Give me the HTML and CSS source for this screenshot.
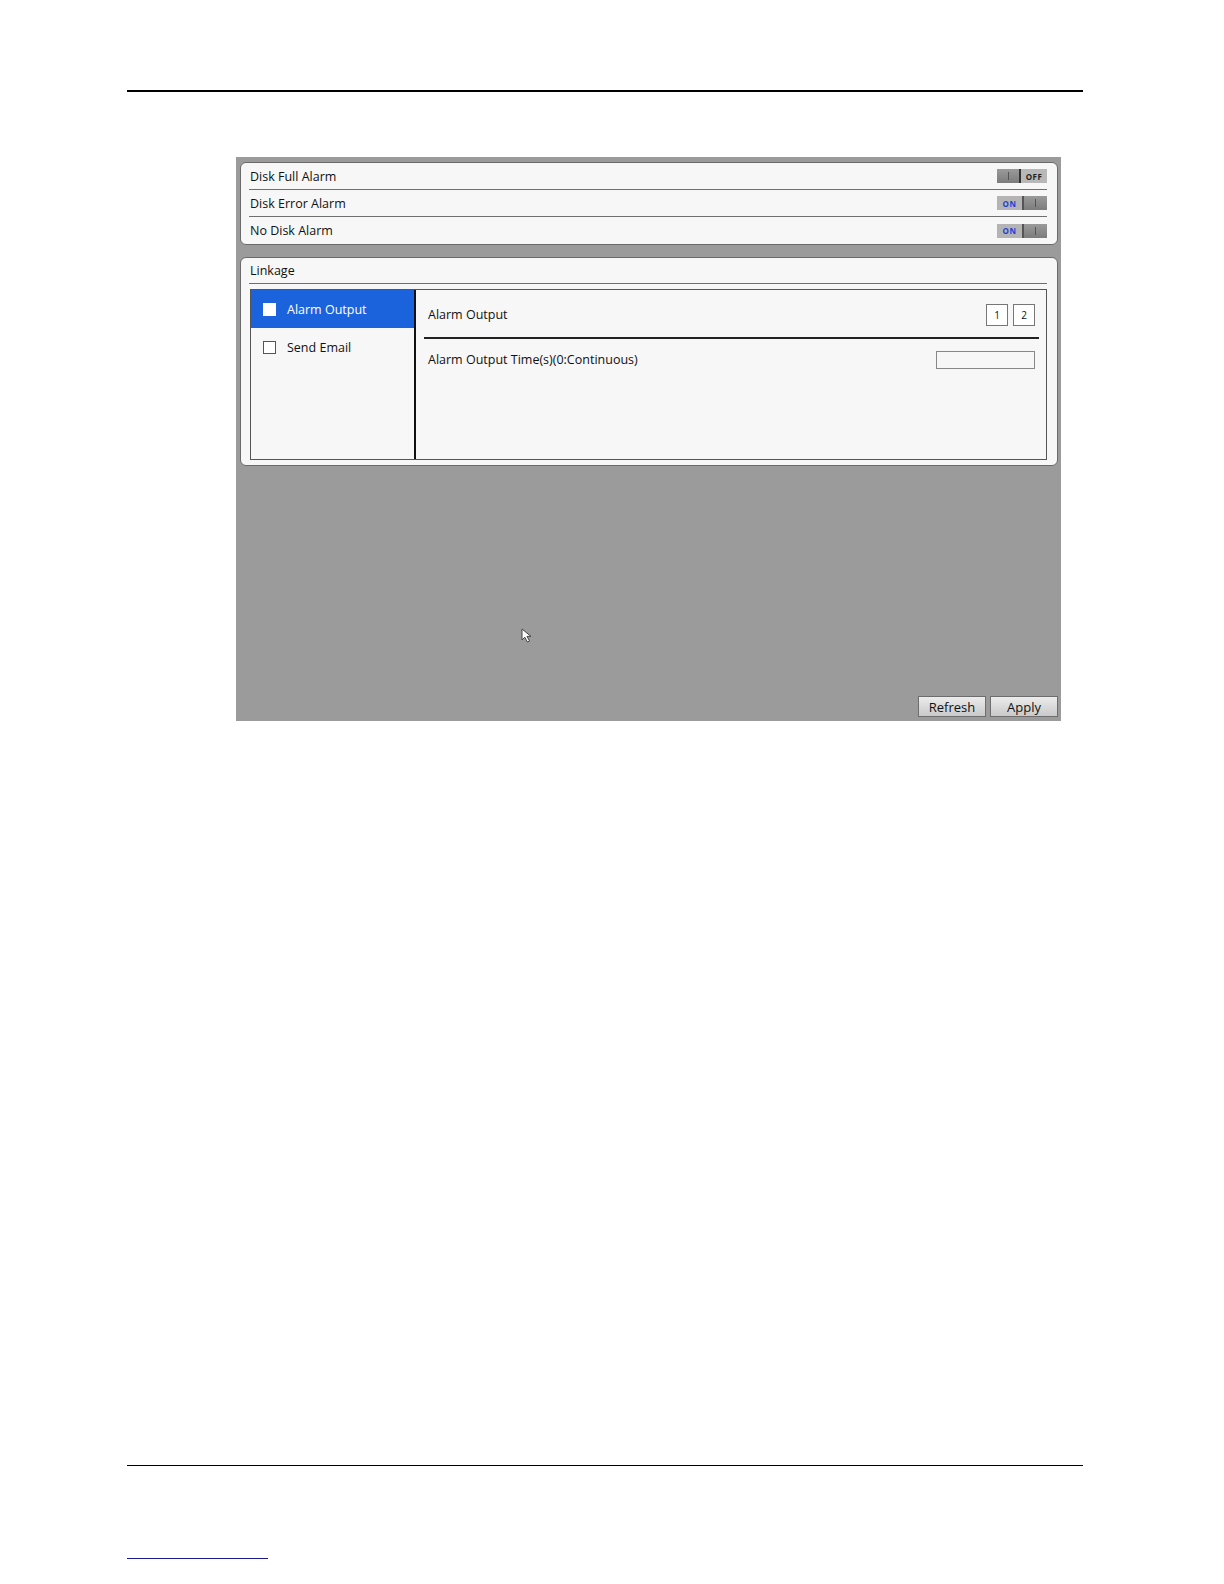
FILE: index.html
```html
<!DOCTYPE html>
<html lang="en">

<head>
    <meta charset="UTF-8">
    <meta name="viewport" content="width=device-width, initial-scale=1.0">
    <title>Disk Alarm</title>
    <link rel="stylesheet" href="styles.css">
</head>

<body>
    <div class="page">
        <div class="top-rule"></div>

        <div class="shot">
            <div class="card alarms">
                <div class="row">
                    <span>Disk Full Alarm</span>
                    <div class="toggle off"><span class="knob"></span><span class="lbl">OFF</span></div>
                </div>
                <div class="row">
                    <span>Disk Error Alarm</span>
                    <div class="toggle on"><span class="lbl">ON</span><span class="knob"></span></div>
                </div>
                <div class="row last">
                    <span>No Disk Alarm</span>
                    <div class="toggle on"><span class="lbl">ON</span><span class="knob"></span></div>
                </div>
            </div>

            <div class="card linkage">
                <div class="card-title">Linkage</div>
                <div class="link-box">
                    <div class="link-list">
                        <div class="link-item active"><span class="check"></span>Alarm Output</div>
                        <div class="link-item"><span class="check"></span>Send Email</div>
                    </div>
                    <div class="link-detail">
                        <div class="detail-row first">
                            <span>Alarm Output</span>
                            <div class="outputs">
                                <span class="out-box">1</span>
                                <span class="out-box">2</span>
                            </div>
                        </div>
                        <div class="detail-row">
                            <span>Alarm Output Time(s)(0:Continuous)</span>
                            <span class="time-input"></span>
                        </div>
                    </div>
                </div>
            </div>

            <div class="spacer">
                <svg class="cursor" width="13" height="15" viewBox="0 0 13 15">
                    <path d="M1 1 L1 12 L3.8 9.2 L6.4 14 L8.6 13 L6 8.4 L10 8.4 Z" fill="#fff" stroke="#444" stroke-width="1" />
                </svg>
            </div>

            <div class="actions">
                <button class="btn">Refresh</button>
                <button class="btn">Apply</button>
            </div>
        </div>

        <div class="bottom-rule"></div>
        <div class="link-line"></div>
    </div>
</body>

</html>
```

FILE: styles.css
```css
body {
    margin: 0;
    padding: 0;
    background-color: #fff;
    font-family: "Open Sans", "Noto Sans", sans-serif;
    overflow: hidden;
}

.page {
    width: 1224px;
    height: 1584px;
    padding-top: 90px;
    box-sizing: border-box;
    position: relative;
}

.top-rule {
    margin-left: 127px;
    width: 956px;
    height: 2px;
    background-color: #000;
}

/* ?screenshot panel */
.shot {
    margin: 65px 0 0 236px;
    width: 825px;
    height: 564px;
    background-color: #9b9b9b;
    padding: 5px 3px 4px 4px;
    box-sizing: border-box;
    display: flex;
    flex-direction: column;
}

.card {
    background-color: #f7f7f7;
    border: 1px solid #6a6a6a;
    border-radius: 6px;
    padding: 0 10px 0 8px;
}

.alarms {
    height: 83px;
    box-sizing: border-box;
}

.row {
    height: 27px;
    border-bottom: 1px solid #6f6f6f;
    display: flex;
    align-items: center;
    justify-content: space-between;
    font-size: 12.5px;
    color: #111;
    box-sizing: border-box;
    padding-left: 1px;
}

.row.last {
    border-bottom: none;
}

.toggle {
    width: 50px;
    height: 14px;
    display: flex;
    background-color: #a9a9a9;
    font-size: 8px;
    font-weight: bold;
    letter-spacing: .5px;
}

.toggle .knob {
    width: 24px;
    height: 14px;
    background: linear-gradient(#9a9a9a, #7c7c7c);
    border-right: 2px solid #333;
    box-sizing: border-box;
    position: relative;
}

.toggle .knob::after {
    content: "";
    position: absolute;
    left: 11px;
    top: 3px;
    width: 1px;
    height: 8px;
    background-color: #555;
}

.toggle.on .knob {
    border-right: none;
    border-left: 2px solid #555;
    width: 25px;
}

.toggle .lbl {
    flex: 1;
    display: flex;
    align-items: center;
    justify-content: center;
}

.toggle.off .lbl {
    color: #222;
    background-color: #b8b8b8;
}

.toggle.on .lbl {
    color: #1c3fd8;
    background-color: #b4b4b4;
}

.linkage {
    margin-top: 12px;
    height: 209px;
    box-sizing: border-box;
}

.card-title {
    height: 25px;
    border-bottom: 1px solid #6f6f6f;
    font-size: 12.5px;
    color: #111;
    display: flex;
    align-items: center;
    padding-left: 1px;
    margin-bottom: 5px;
}

.link-box {
    margin-left: 1px;
    height: 171px;
    border: 1px solid #555;
    display: flex;
    box-sizing: border-box;
}

.link-list {
    width: 163px;
    border-right: 2px solid #111;
    flex-shrink: 0;
}

.link-item {
    height: 38px;
    display: flex;
    align-items: center;
    font-size: 12.5px;
    color: #111;
    padding-left: 12px;
}

.link-item.active {
    background-color: #1a63dd;
    color: #fff;
}

.check {
    width: 11px;
    height: 11px;
    border: 1px solid #555;
    background-color: #fff;
    margin-right: 11px;
}

.link-item.active .check {
    border-color: #fff;
}

.link-detail {
    flex: 1;
    padding: 0 7px 0 8px;
}

.detail-row {
    height: 40px;
    display: flex;
    align-items: center;
    justify-content: space-between;
    font-size: 12.5px;
    color: #111;
    padding: 0 4px;
}

.detail-row.first {
    height: 49px;
    border-bottom: 2px solid #222;
    padding-top: 2px;
    box-sizing: border-box;
}

.outputs {
    display: flex;
    gap: 5px;
}

.out-box {
    width: 22px;
    height: 22px;
    border: 1px solid #777;
    background-color: #fff;
    box-sizing: border-box;
    font-size: 10px;
    display: flex;
    align-items: center;
    justify-content: center;
}

.time-input {
    width: 99px;
    height: 18px;
    border: 1px solid #888;
    background-color: #f7f7f7;
    box-sizing: border-box;
    margin-top: 1px;
}

.spacer {
    flex: 1;
    position: relative;
}

.cursor {
    position: absolute;
    left: 281px;
    top: 162px;
}

.actions {
    display: flex;
    justify-content: flex-end;
    gap: 4px;
}

.btn {
    width: 68px;
    height: 21px;
    padding: 0;
    font-family: "Open Sans", "Noto Sans", sans-serif;
    font-size: 13px;
    color: #111;
    border: 1px solid #6d6d6d;
    background: linear-gradient(#ececec, #c9c9c9);
}

.bottom-rule {
    position: absolute;
    left: 127px;
    top: 1465px;
    width: 956px;
    height: 1px;
    background-color: #000;
}

.link-line {
    position: absolute;
    left: 127px;
    top: 1558px;
    width: 141px;
    height: 1px;
    background-color: #1a1a8c;
}
```
